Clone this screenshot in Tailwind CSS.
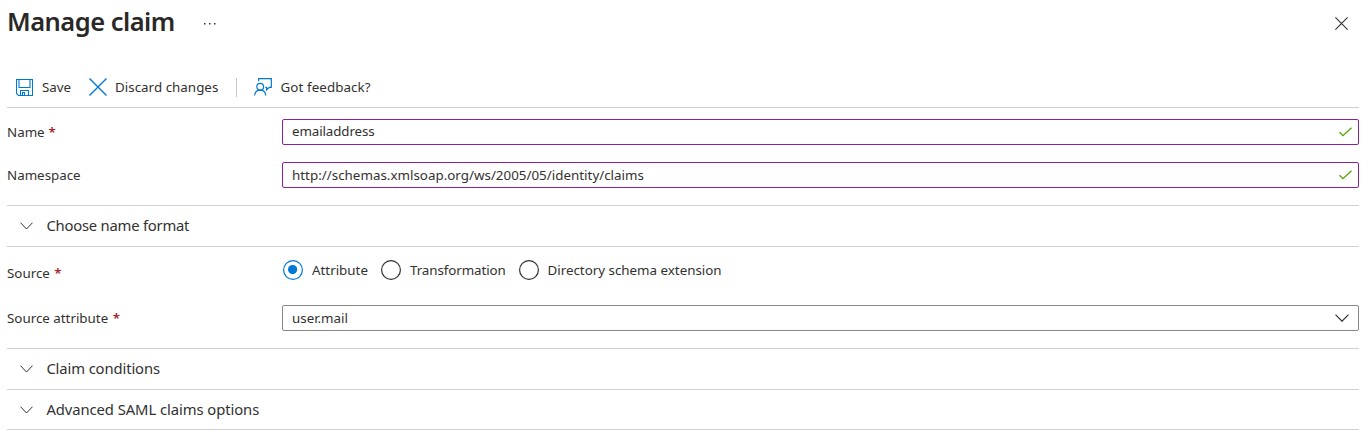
<!DOCTYPE html>
<html lang="en">
<head>
<meta charset="utf-8">
<title>Manage claim</title>
<script src="https://cdn.jsdelivr.net/npm/@tailwindcss/browser@4"></script>
</head>
<body class="bg-white text-[#323130] font-['Noto_Sans',sans-serif] text-[13.35px] leading-5 h-[439px] overflow-hidden pl-[7px] pr-[13px] whitespace-nowrap">
  <header class="flex h-[67px] items-start">
    <h1 class="text-[25.5px] tracking-[-0.52px] font-semibold leading-8 pt-[5px] w-[196px] text-[#292827]">Manage claim</h1>
    <svg class="mt-[22px]" width="14" height="4" fill="#323130"><path d="M1 1h1.5v1.5H1zM6 1h1.5v1.5H6zM11 1h1.5v1.5H11z"/></svg>
    <svg class="ml-auto mt-[17px] mr-[11px]" width="13" height="13" fill="none" stroke="#323130" stroke-width="1.1"><path d="M.4.4l12.2 12.2M12.6.4L.4 12.6"/></svg>
  </header>
  <nav class="flex h-[41px] items-center border-b border-[#d2d0ce] pl-[9px]">
    <svg width="17" height="17" fill="none" stroke="#0078d4" stroke-width="1.1"><path d="M.5.5h16v16h-14l-2-2zM3 .5v8h11v-8M4.500 16.500v-5h8v5M6.500 16.500v-3h2v3"/></svg>
    <span class="ml-[9px] w-[47px]">Save</span>
    <svg width="18" height="18" fill="none" stroke="#0078d4" stroke-width="1.4"><path d="M.5.500l17 17M17.500.500l-17 17"/></svg>
    <span class="ml-2 w-[121px] tracking-[0.03px]">Discard changes</span>
    <span class="h-[19px] w-px bg-[#c8c6c4]"></span>
    <svg class="ml-[17px]" width="18" height="18" fill="none" stroke="#0078d4" stroke-width="1.2"><circle cx="6.200" cy="8.700" r="3.400"/><path d="M.6 17.500c.3-3.300 2.600-5.400 5.600-5.400s5.300 2.100 5.600 5.400M4.600 3.300V.7h12.700v8.600h-2l-2.700 2.600V9.300h-1.300"/></svg>
    <span class="ml-[8.500px] tracking-[0.1px]">Got feedback?</span>
  </nav>
  <section class="h-[97px] pt-[11px]">
    <div class="flex h-[43px] items-start">
      <label class="w-[275px] pt-[3px]">Name <span class="ml-[0.500px] text-[#a4262c] font-semibold">*</span></label>
      <div class="flex h-[26px] flex-1 items-center justify-between rounded-[2px] border border-[#8a22a0] pl-[9px] pr-[6px]"><span class="-mt-[2px] tracking-[-0.1px]">emailaddress</span>
        <svg class="-mt-px" width="13" height="10" fill="none" stroke="#57a300" stroke-width="1.300"><path d="M.5 5.200l3.500 3.500L12.500.700"/></svg></div>
    </div>
    <div class="flex items-start">
      <label class="w-[275px] pt-[3px]">Namespace</label>
      <div class="flex h-[26px] flex-1 items-center justify-between rounded-[2px] border border-[#8a22a0] pl-[9px] pr-[6px]"><span class="tracking-[0.02px]">http://schemas.xmlsoap.org/ws/2005/05/identity/claims</span>
        <svg width="13" height="10" fill="none" stroke="#57a300" stroke-width="1.300"><path d="M.5 5.200l3.500 3.500L12.500.700"/></svg></div>
    </div>
  </section>
  <div class="flex h-[42px] items-center border-y border-[#d2d0ce] pl-[13px] text-[14.800px]">
    <svg width="13" height="8" fill="none" stroke="#323130"><path d="M.5.700l6 6.300 6-6.300"/></svg>
    <span class="ml-[13.400px] -mt-[2px] tracking-[-0.22px]">Choose name format</span>
  </div>
  <section class="h-[101px] pt-[13px]">
    <div class="flex h-[45px] items-start">
      <span class="w-[275px] pt-[3px]">Source <span class="ml-[1px] text-[#a4262c] font-semibold">*</span></span>
      <div class="flex h-5 items-center">
        <svg class="ml-px" width="20" height="20"><circle cx="10" cy="10" r="9.400" fill="none" stroke="#0078d4" stroke-width="1.200"/><circle cx="9.600" cy="9.600" r="4.600" fill="#0078d4"/></svg>
        <span class="ml-[9px] w-[69px]">Attribute</span>
        <svg width="20" height="20"><circle cx="10" cy="10" r="9.400" fill="none" stroke="#323130" stroke-width="1.200"/></svg>
        <span class="ml-[9px] w-[109px] tracking-[-0.08px]">Transformation</span>
        <svg width="20" height="20"><circle cx="10" cy="10" r="9.400" fill="none" stroke="#323130" stroke-width="1.200"/></svg>
        <span class="ml-[8.500px]">Directory schema extension</span>
      </div>
    </div>
    <div class="flex items-start">
      <label class="w-[275px] pt-[3px]">Source attribute <span class="ml-[1px] text-[#a4262c] font-semibold">*</span></label>
      <div class="flex h-[26px] flex-1 items-center justify-between rounded-[2px] border border-[#8a8886] pl-[9px] pr-[9px]"><span>user.mail</span>
        <svg width="14" height="8" fill="none" stroke="#323130" stroke-width="1.200"><path d="M.5.700L7 7.200 13.500.700"/></svg></div>
    </div>
  </section>
  <div class="flex h-[42px] items-center border-y border-[#d2d0ce] pl-[13px] text-[14.800px]">
    <svg width="13" height="8" fill="none" stroke="#323130"><path d="M.5.700l6 6.300 6-6.300"/></svg>
    <span class="ml-[13.400px] -mt-[2px] tracking-[-0.12px]">Claim conditions</span>
  </div>
  <div class="flex h-[40px] items-center border-b border-[#d2d0ce] pl-[13px] text-[14.800px]">
    <svg width="13" height="8" fill="none" stroke="#323130"><path d="M.5.700l6 6.300 6-6.300"/></svg>
    <span class="ml-[13.400px] -mt-[2px] tracking-[-0.07px]">Advanced SAML claims options</span>
  </div>
</body>
</html>
